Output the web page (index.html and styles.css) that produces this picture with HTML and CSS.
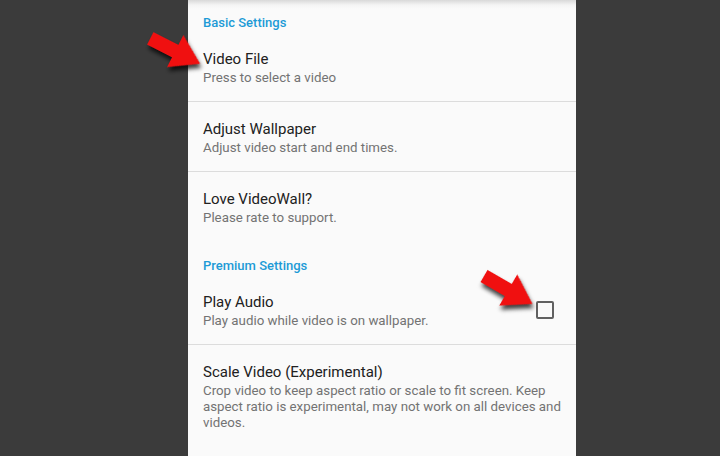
FILE: index.html
```html
<!DOCTYPE html>
<html lang="en">
<head>
    <meta charset="UTF-8">
    <title>VideoWall Settings</title>
    <link rel="stylesheet" href="styles.css">
</head>
<body>
    <div class="screen">
        <div class="panel">
            <div class="group">
                <div class="category">Basic Settings</div>
                <div class="pref">
                    <div class="pref-text">
                        <div class="title">Video File</div>
                        <div class="summary">Press to select a video</div>
                    </div>
                    <svg class="arrow arrow-file" width="70" height="50" viewBox="0 0 70 50">
                        <polygon points="5,18 33,18 33,7 61,25 33,43 33,32 5,32" />
                    </svg>
                </div>
                <div class="pref">
                    <div class="pref-text">
                        <div class="title">Adjust Wallpaper</div>
                        <div class="summary">Adjust video start and end times.</div>
                    </div>
                </div>
                <div class="pref last">
                    <div class="pref-text">
                        <div class="title">Love VideoWall?</div>
                        <div class="summary">Please rate to support.</div>
                    </div>
                </div>
            </div>
            <div class="group">
                <div class="category">Premium Settings</div>
                <div class="pref">
                    <div class="pref-text">
                        <div class="title">Play Audio</div>
                        <div class="summary">Play audio while video is on wallpaper.</div>
                    </div>
                    <div class="checkbox"></div>
                    <svg class="arrow arrow-audio" width="70" height="50" viewBox="0 0 70 50">
                        <polygon points="5,18 33,18 33,7 61,25 33,43 33,32 5,32" />
                    </svg>
                </div>
                <div class="pref last">
                    <div class="pref-text">
                        <div class="title">Scale Video (Experimental)</div>
                        <div class="summary">Crop video to keep aspect ratio or scale to fit screen. Keep aspect ratio is experimental, may not work on all devices and videos.</div>
                    </div>
                </div>
            </div>
        </div>
    </div>
</body>
</html>
```

FILE: styles.css
```css
html, body {
    margin: 0;
    height: 100%;
}
body {
    background-color: #3b3b3b;
    font-family: Roboto, "Noto Sans", Arial, sans-serif;
    overflow: hidden;
}
.screen {
    padding-left: 188px;
    height: 100%;
}
.panel {
    width: 388px;
    height: 100%;
    background: linear-gradient(#d9d9d9, #f4f4f4 5px, #fafafa 9px);
}
.category {
    color: #1d9ad6;
    font-size: 13px;
    font-weight: 500;
    line-height: 16px;
    padding: 17px 15px 1px;
}
.group:first-child .category {
    padding-top: 15px;
}
.pref {
    position: relative;
    display: flex;
    align-items: center;
    padding: 17px 12px 15px 15px;
    border-bottom: 1px solid #dcdcdc;
}
.pref.last {
    border-bottom: none;
}
.pref-text {
    flex: 1;
}
.title {
    color: #212121;
    font-size: 15px;
    line-height: 20px;
}
.summary {
    color: #737373;
    font-size: 13.3px;
    line-height: 16px;
    margin-top: 1px;
}
.checkbox {
    width: 14px;
    height: 14px;
    border: 2px solid #616161;
    border-radius: 2px;
    margin-right: 10px;
    margin-top: -1px;
}
.arrow {
    position: absolute;
    fill: #f01010;
    filter: drop-shadow(3px 3px 2px rgba(0, 0, 0, 0.75));
}
.arrow-file {
    left: -46px;
    top: -5px;
    transform: rotate(27deg);
}
.arrow-audio {
    right: 31px;
    top: -9px;
    transform: rotate(30deg);
}
```
